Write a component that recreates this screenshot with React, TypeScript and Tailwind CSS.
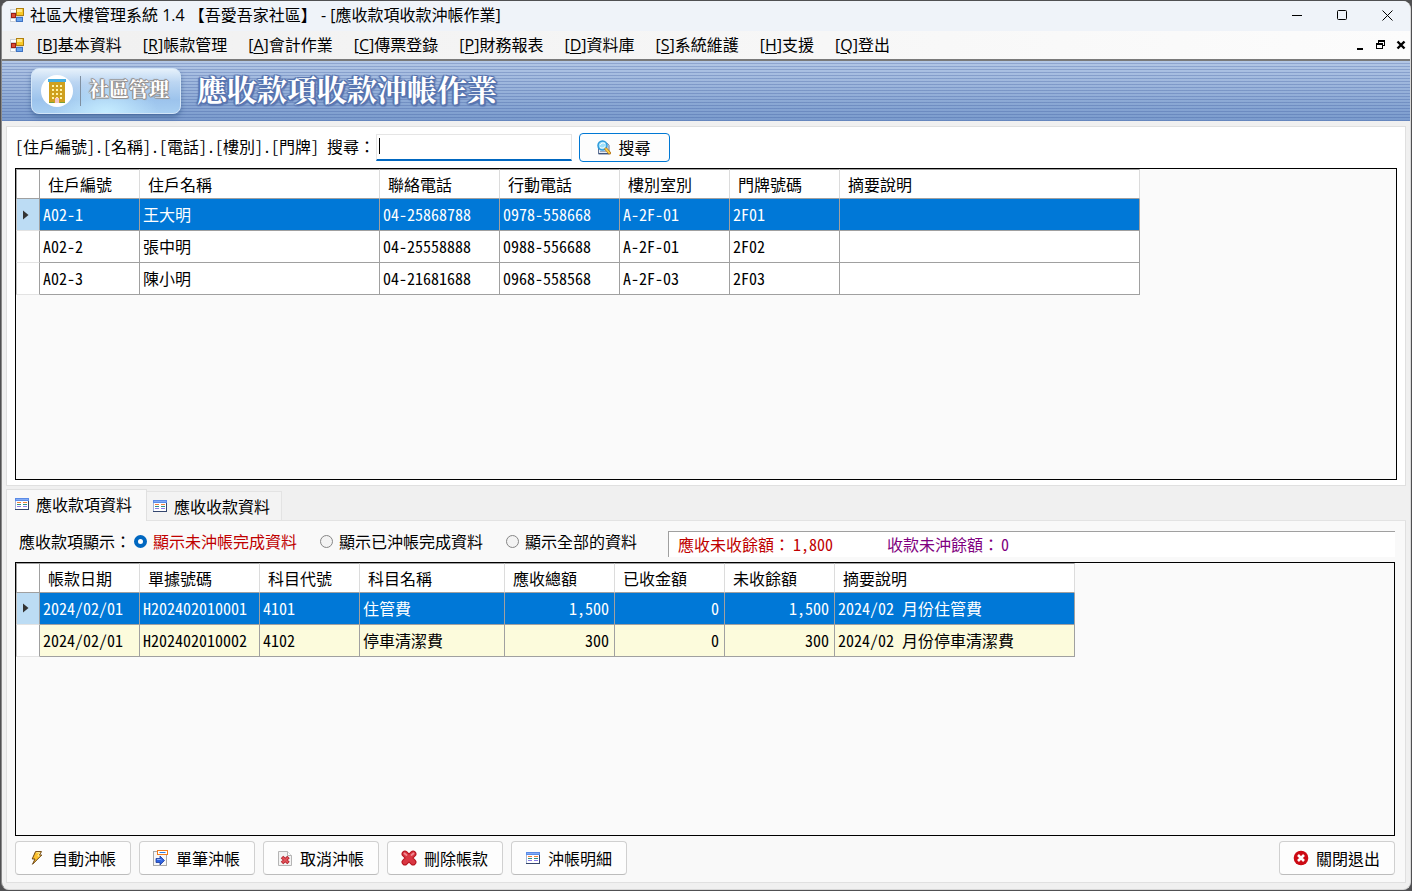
import { useState, type ReactNode } from 'react';

const UI = "font-['Open_Sans','Noto_Sans_CJK_TC',sans-serif]";
const MONO = "font-['Noto_Sans_Mono_CJK_TC','Noto_Sans_CJK_TC',monospace]";
const SERIF = "font-['Noto_Serif_CJK_TC','Noto_Sans_CJK_TC',serif]";

function FormIcon() {
  return (
    <svg width="14" height="14" viewBox="0 0 14 14" aria-hidden="true" shapeRendering="crispEdges">
      <rect x="0" y="1" width="13" height="13" fill="#cdd2d8" />
      <rect x="1" y="2" width="5" height="2" fill="#fff" />
      <rect x="1" y="11" width="4" height="2" fill="#fff" />
      <rect x="1" y="5" width="5" height="5" fill="#9b1f14" />
      <rect x="2" y="6" width="3" height="3" fill="#dc4a34" />
      <rect x="6" y="0" width="8" height="8" fill="#b07f10" />
      <rect x="7" y="1" width="6" height="6" fill="#f8c927" />
      <rect x="7" y="1" width="5" height="3" fill="#ffe78a" />
      <rect x="6" y="9" width="7" height="5" fill="#3f73c4" />
      <rect x="7" y="10" width="5" height="3" fill="#6aa5ee" />
    </svg>
  );
}

function ListIcon() {
  return (
    <svg width="14" height="12" viewBox="0 0 14 12" aria-hidden="true" shapeRendering="crispEdges">
      <rect x="0" y="0" width="14" height="12" fill="#a3b4d8" />
      <rect x="0" y="0" width="14" height="3" fill="#5b8be6" />
      <rect x="1" y="1" width="12" height="1" fill="#84abf5" />
      <rect x="1" y="3" width="12" height="8" fill="#fff" />
      <rect x="13" y="3" width="1" height="9" fill="#34466e" />
      <rect x="0" y="11" width="14" height="1" fill="#34466e" />
      <path d="M2 4.500h4M8 4.500h4" stroke="#f0813c" />
      <path d="M2 6.500h4M8 6.500h4" stroke="#2f8f86" />
      <path d="M2 8.500h4M8 8.500h4" stroke="#8a7de8" />
    </svg>
  );
}

function SearchIcon() {
  return (
    <svg width="14" height="15" viewBox="0 0 14 15" aria-hidden="true">
      <path d="M1.500 3.500h9l1.500 2v8.500H1.500z" fill="#e8edf4" stroke="#5f7396" />
      <path d="M2 13.500h10.500" stroke="#40537a" />
      <path d="M3 11.500h6" stroke="#9aa8be" />
      <circle cx="5.500" cy="5.500" r="4.500" fill="#9fe0fb" stroke="#2c9adb" strokeWidth="1.500" />
      <path d="M3 5c1-2 3-2.500 5-1.500M3 7.500c2 .8 3 .6 5-.8" stroke="#fff" fill="none" />
      <path d="M9 9l3.500 4" stroke="#b97812" strokeWidth="3" strokeLinecap="round" />
      <path d="M9 9l3.200 3.700" stroke="#ffd24a" strokeWidth="1.700" strokeLinecap="round" />
    </svg>
  );
}

function BoltIcon() {
  return (
    <svg width="12" height="14" viewBox="0 0 12 14" aria-hidden="true">
      <path d="M4.500.6h6L8.400 4h2.400L1.500 13.300 4 8H1.200l3.300-7.400z" fill="#fbc02d" stroke="#6b4515" strokeLinejoin="round" />
      <path d="M5.300 1.700h3.500L6.800 5h1.700" stroke="#fff0a0" fill="none" />
    </svg>
  );
}

function SingleIcon() {
  return (
    <svg width="15" height="16" viewBox="0 0 15 16" aria-hidden="true">
      <rect x="0.5" y="1.500" width="13" height="14" fill="#f7f7f7" stroke="#a9a9a9" />
      <rect x="4.500" y="0.5" width="10" height="4" fill="#fff" stroke="#f07c1e" />
      <path d="M6.500 2.500h6" stroke="#2f7fe0" />
      <path d="M3 8.500h4V6l4.500 4.500L7 15v-2.500H3z" fill="#2f63e0" stroke="#1c3a9c" strokeWidth="0.800" />
      <path d="M4 9.500h3.500l1 .5" stroke="#8fb4ff" fill="none" />
    </svg>
  );
}

function CancelDocIcon() {
  return (
    <svg width="14" height="15" viewBox="0 0 14 15" aria-hidden="true">
      <path d="M.5.5h9l4 4v10H.5z" fill="#f3f3f3" stroke="#b5b5b5" />
      <path d="M9.500.5v4h4" fill="#fff" stroke="#b5b5b5" />
      <path d="M4 6l6.500 6M10.500 6L4 12" stroke="#b0202a" strokeWidth="3.600" />
      <path d="M4.500 6.500l5.500 5M10 6.500l-5.500 5" stroke="#e2525a" strokeWidth="1.800" />
    </svg>
  );
}

function DeleteIcon() {
  return (
    <svg width="16" height="16" viewBox="0 0 16 16" aria-hidden="true">
      <path d="M3.900 3.900l8.200 8.200M12.100 3.900l-8.200 8.200" stroke="#b5141f" strokeWidth="6.600" strokeLinecap="round" />
      <path d="M3.900 3.900l8.200 8.200M12.100 3.900l-8.200 8.200" stroke="#d93642" strokeWidth="4.600" strokeLinecap="round" />
      <path d="M3.500 3.500l2 1.500M12.500 3.500l-2 1.500" stroke="#f08a92" strokeWidth="1.800" strokeLinecap="round" />
    </svg>
  );
}

function CloseIcon() {
  return (
    <svg width="16" height="16" viewBox="0 0 16 16" aria-hidden="true">
      <circle cx="8" cy="8" r="7.300" fill="#cc0a14" />
      <path d="M5 5l6 6M11 5l-6 6" stroke="#fff" strokeWidth="2.600" />
    </svg>
  );
}

function BuildingIcon() {
  const windows = [];
  for (let r = 0; r < 4; r++)
    for (let c = 0; c < 3; c++)
      windows.push(<rect key={`${r}-${c}`} x={11 + c * 4} y={10 + r * 4} width="2" height="2" fill="#fff3a8" />);
  return (
    <svg width="32" height="32" viewBox="0 0 32 32" aria-hidden="true">
      <circle cx="16" cy="16" r="16" fill="#fff" />
      <rect x="8" y="6" width="16" height="22" fill="#cfa01e" />
      <rect x="7" y="4" width="18" height="3" fill="#4aaee0" />
      {windows}
      <rect x="14" y="23" width="4" height="5" fill="#f5c6c8" />
      <path d="M8 27.500h5M19 27.500h5" stroke="#7aa03a" />
    </svg>
  );
}

const menu: [string, string][] = [
  ['B', '基本資料'],
  ['R', '帳款管理'],
  ['A', '會計作業'],
  ['C', '傳票登錄'],
  ['P', '財務報表'],
  ['D', '資料庫'],
  ['S', '系統維護'],
  ['H', '支援'],
  ['Q', '登出'],
];

type Column = { title: string; col: string; right?: boolean };

const residentColumns: Column[] = [
  { title: '住戶編號', col: 'w-[100px]' },
  { title: '住戶名稱', col: 'w-[240px]' },
  { title: '聯絡電話', col: 'w-[120px]' },
  { title: '行動電話', col: 'w-[120px]' },
  { title: '樓別室別', col: 'w-[110px]' },
  { title: '門牌號碼', col: 'w-[110px]' },
  { title: '摘要說明', col: 'w-[300px]' },
];
const residents = [
  ['A02-1', '王大明', '04-25868788', '0978-558668', 'A-2F-01', '2F01', ''],
  ['A02-2', '張中明', '04-25558888', '0988-556688', 'A-2F-01', '2F02', ''],
  ['A02-3', '陳小明', '04-21681688', '0968-558568', 'A-2F-03', '2F03', ''],
];

const billColumns: Column[] = [
  { title: '帳款日期', col: 'w-[100px]' },
  { title: '單據號碼', col: 'w-[120px]' },
  { title: '科目代號', col: 'w-[100px]' },
  { title: '科目名稱', col: 'w-[145px]' },
  { title: '應收總額', col: 'w-[110px]', right: true },
  { title: '已收金額', col: 'w-[110px]', right: true },
  { title: '未收餘額', col: 'w-[110px]', right: true },
  { title: '摘要說明', col: 'w-[240px]' },
];
const bills = [
  ['2024/02/01', 'H202402010001', '4101', '住管費', '1,500', '0', '1,500', '2024/02 月份住管費'],
  ['2024/02/01', 'H202402010002', '4102', '停車清潔費', '300', '0', '300', '2024/02 月份停車清潔費'],
];

function DataGrid({ label, columns, rows, width, altRow }: { label: string; columns: Column[]; rows: string[][]; width: string; altRow: string }) {
  const [selected, setSelected] = useState(0);
  return (
    <div className="min-h-0 flex-1 overflow-hidden border border-black bg-[#fafafa]">
      <table aria-label={label} className={`${width} table-fixed border-separate border-spacing-0 text-base leading-6`}>
        <colgroup>
          <col className="w-6" />
          {columns.map((c) => (
            <col key={c.title} className={c.col} />
          ))}
        </colgroup>
        <thead>
          <tr className="h-[30px] bg-white">
            <th className="border-t border-r border-b border-l border-[#a0a0a0] p-0" />
            {columns.map((c) => (
              <th key={c.title} className="border-t border-r border-b border-t-[#a0a0a0] border-r-[#dcdcdc] border-b-[#a0a0a0] p-0 pl-2 text-left font-normal whitespace-nowrap">
                {c.title}
              </th>
            ))}
          </tr>
        </thead>
        <tbody>
          {rows.map((row, i) => (
            <tr key={i} className="h-8" onClick={() => setSelected(i)}>
              <td className={`border-r border-b border-l border-r-[#a0a0a0] border-b-[#e3e3e3] border-l-[#c4c4c4] p-0 ${i === selected ? 'bg-[#bcdcf4]' : 'bg-white'}`}>
                {i === selected && (
                  <svg className="ml-[6px]" width="6" height="10" viewBox="0 0 6 10" aria-hidden="true">
                    <path d="M0 .5L5.500 5 0 9.500z" fill="#333" />
                  </svg>
                )}
              </td>
              {row.map((v, j) => (
                <td
                  key={j}
                  className={`border-r border-b border-[#a0a0a0] pt-0 pb-px pl-[3px] whitespace-nowrap ${columns[j].right ? 'pr-[5px] text-right' : 'pr-0'} ${
                    i === selected ? 'bg-[#0078d7] text-white' : altRow
                  }`}
                >
                  {v}
                </td>
              ))}
            </tr>
          ))}
        </tbody>
      </table>
    </div>
  );
}

function ActionButton({ icon, children }: { icon: ReactNode; children: ReactNode }) {
  return (
    <button type="button" className="flex h-[34px] w-[116px] items-center rounded border border-[#d0d0d0] border-b-[#bcbcbc] bg-[#fdfdfd] pl-3 text-base">
      <span className="flex w-[17px] justify-center">{icon}</span>
      <span className="pl-[7px] whitespace-nowrap">{children}</span>
    </button>
  );
}

const filters = [
  { id: 'open', label: '顯示未沖帳完成資料' },
  { id: 'done', label: '顯示已沖帳完成資料' },
  { id: 'all', label: '顯示全部的資料' },
];

export default function App() {
  const [filter, setFilter] = useState('open');
  return (
    <div lang="zh-TW" className="flex min-h-screen flex-col bg-[#505052] px-px pt-px pb-px text-black">
      <div className="flex flex-1 flex-col overflow-hidden rounded-lg border-r border-b border-l border-[#d8d8d8] border-l-[#8a8a8a] bg-[#f0f0f0]">
        <header className={`flex h-[30px] items-center bg-[#eff3f9] pb-[2px] pl-2 ${UI}`}>
          <FormIcon />
          <h1 className="flex-1 pl-[6px] text-base leading-6 font-normal whitespace-nowrap">社區大樓管理系統 1.4 【吾愛吾家社區】 - [應收款項收款沖帳作業]</h1>
          <div className="flex">
            <button type="button" aria-label="最小化" className="flex h-[28px] w-[45px] items-center justify-center">
              <svg width="11" height="11" viewBox="0 0 11 11"><path d="M0 5.500h10" stroke="#000" /></svg>
            </button>
            <button type="button" aria-label="最大化" className="flex h-[28px] w-[45px] items-center justify-center">
              <svg width="11" height="11" viewBox="0 0 11 11"><rect x=".5" y=".5" width="9" height="9" rx="1" fill="none" stroke="#000" /></svg>
            </button>
            <button type="button" aria-label="關閉" className="flex h-[28px] w-[45px] items-center justify-center">
              <svg width="11" height="11" viewBox="0 0 11 11"><path d="M.5.5l10 10M10.500.5l-10 10" stroke="#000" /></svg>
            </button>
          </div>
        </header>

        <nav className={`flex h-7 items-center bg-linear-to-r from-[#f0f0f0] to-[#fcfcfc] pl-2 text-base leading-6 ${UI}`}>
          <FormIcon />
          <ul className="flex flex-1 gap-[21px] pl-[13px]">
            {menu.map(([key, label]) => (
              <li key={key}>
                <a href="#" className="whitespace-nowrap">
                  [<span className="underline underline-offset-2">{key}</span>]{label}
                </a>
              </li>
            ))}
          </ul>
          <div className="flex gap-2 pr-[3px]">
            <button type="button" aria-label="最小化子視窗">
              <svg width="12" height="12" viewBox="0 0 12 12"><path d="M2 10h6" stroke="#000" strokeWidth="2" /></svg>
            </button>
            <button type="button" aria-label="還原子視窗">
              <svg width="12" height="12" viewBox="0 0 12 12" fill="none" stroke="#000" shapeRendering="crispEdges">
                <path d="M3.500 4V1.500h6V6.500H7M3 2.500h7" />
                <path d="M1.500 4.500h6v5h-6zM1 5.500h7" />
              </svg>
            </button>
            <button type="button" aria-label="關閉子視窗">
              <svg width="12" height="12" viewBox="0 0 12 12"><path d="M2.500 2.500l7 7M9.500 2.500l-7 7" stroke="#000" strokeWidth="2.400" /></svg>
            </button>
          </div>
        </nav>

        <div className={`flex h-[62px] items-center border-t-2 border-[#7a7a7a] bg-[repeating-linear-gradient(to_bottom,transparent_0px,transparent_2px,rgba(50,80,150,0.28)_2px,rgba(50,80,150,0.28)_3px),linear-gradient(to_bottom,#b3c7e6,#7a9bcd)] pr-4 pb-px pl-[29px] ${SERIF}`}>
          <div className="flex h-[46px] w-[150px] items-center rounded-lg border border-[#d3e6f8] bg-[radial-gradient(ellipse_at_50%_100%,#c5ecff_0%,rgba(160,205,245,0)_50%),linear-gradient(to_bottom,#e6f1fb_0%,#bcd6f2_30%,#9cc3ec_70%,#a8cff2_100%)] pl-[9px] shadow-[0_3px_5px_rgba(40,80,130,0.5)]">
            <BuildingIcon />
            <span className="ml-[7px] h-[30px] w-px bg-[#7f8fa0]" />
            <span className="pb-[3px] pl-2 text-xl leading-7 font-bold whitespace-nowrap text-white [text-shadow:1px_0_#95918f,-1px_0_#95918f,0_1px_#95918f,0_-1px_#95918f,1px_1px_1px_#95918f,-1px_-1px_1px_#95918f]">社區管理</span>
          </div>
          <h2 className="pb-[5px] pl-4 text-[30px] leading-10 font-bold whitespace-nowrap text-white [text-shadow:1px_1px_#5875b0,-1px_1px_#5875b0,1px_-1px_#5875b0,-1px_-1px_#5875b0,2px_2px_1px_#5875b0,-2px_0_1px_#5875b0,2px_0_1px_#5875b0,0_2px_1px_#5875b0]">應收款項收款沖帳作業</h2>
        </div>

        <main className={`flex flex-1 flex-col px-1 pt-[5px] pb-1.5 text-base leading-6 ${MONO}`}>
          <section className="flex flex-[360_1_0px] flex-col border border-[#e0e0e0] bg-white px-2 pb-[5px]">
            <form className="flex h-[41px] items-center" onSubmit={(e) => e.preventDefault()}>
              <label htmlFor="keyword" className="pr-px pb-[3px] whitespace-pre">[住戶編號].[名稱].[電話].[樓別].[門牌] 搜尋：</label>
              <span className="relative">
                <input id="keyword" type="text" className="block h-[27px] w-[196px] border border-b-2 border-[#e5e5e5] border-b-[#0067c0] bg-white px-1 outline-none" />
                <span className="pointer-events-none absolute top-1 left-[3px] h-4 w-px bg-black" />
              </span>
              <button type="submit" className="ml-[7px] flex h-[29px] w-[91px] items-center justify-center gap-2 rounded border border-[#0078d4] bg-[#fdfdfd] pr-[2px] pb-px whitespace-nowrap">
                <SearchIcon />
                搜尋
              </button>
            </form>
            <DataGrid label="住戶" columns={residentColumns} rows={residents} width="w-[1124px]" altRow="bg-white" />
          </section>

          <div role="tablist" className="mt-[3px] flex h-8 items-end">
            <button type="button" role="tab" aria-selected="true" className="flex h-8 w-[141px] items-center gap-[7px] border border-b-0 border-[#e0e0e0] bg-[#f9f9f9] pb-[2px] pl-2 whitespace-nowrap">
              <ListIcon />
              應收款項資料
            </button>
            <button type="button" role="tab" aria-selected="false" className="flex h-[30px] w-[135px] items-center gap-[7px] border border-l-0 border-[#e3e3e3] bg-[#f3f3f3] pl-[6px] whitespace-nowrap">
              <ListIcon />
              應收收款資料
            </button>
            <span className="h-px flex-1 bg-[#e3e3e3]" />
          </div>
          <section className="flex flex-[362_1_0px] flex-col border border-t-0 border-[#e0e0e0] bg-[#f9f9f9] pr-[10px] pb-[7px] pl-2">
            <div className="flex h-[41px] items-center">
              <span className="pl-1 whitespace-nowrap">應收款項顯示：</span>
              <div role="radiogroup" aria-label="應收款項顯示" className="flex gap-[23px] pl-[3px]">
                {filters.map((f) => (
                  <label key={f.id} className={`flex items-center gap-[6px] whitespace-nowrap ${filter === f.id ? 'text-[#c00000]' : ''}`}>
                    <input
                      type="radio"
                      name="filter"
                      checked={filter === f.id}
                      onChange={() => setFilter(f.id)}
                      className="size-[13px] appearance-none rounded-full border border-[#868686] bg-[#f3f3f3] checked:border-4 checked:border-[#0067c0] checked:bg-white"
                    />
                    {f.label}
                  </label>
                ))}
              </div>
              <div className="mb-[5px] ml-[31px] flex h-[26px] flex-1 items-center gap-[54px] self-end border-t border-l border-[#a0a0a0] bg-white pl-[9px] whitespace-nowrap">
                <span className="text-[#c00000]">應收未收餘額：<span className="pl-[3px]">1,800</span></span>
                <span className="text-[#800080]">收款未沖餘額：<span className="pl-[2px]">0</span></span>
              </div>
            </div>
            <DataGrid label="應收款項" columns={billColumns} rows={bills} width="w-[1059px]" altRow="bg-[#fcfbdc]" />
            <div className="flex gap-2 pt-[5px]">
              <ActionButton icon={<BoltIcon />}>自動沖帳</ActionButton>
              <ActionButton icon={<SingleIcon />}>單筆沖帳</ActionButton>
              <ActionButton icon={<CancelDocIcon />}>取消沖帳</ActionButton>
              <ActionButton icon={<DeleteIcon />}>刪除帳款</ActionButton>
              <ActionButton icon={<ListIcon />}>沖帳明細</ActionButton>
              <span className="flex-1" />
              <ActionButton icon={<CloseIcon />}>關閉退出</ActionButton>
            </div>
          </section>
        </main>
      </div>
    </div>
  );
}
